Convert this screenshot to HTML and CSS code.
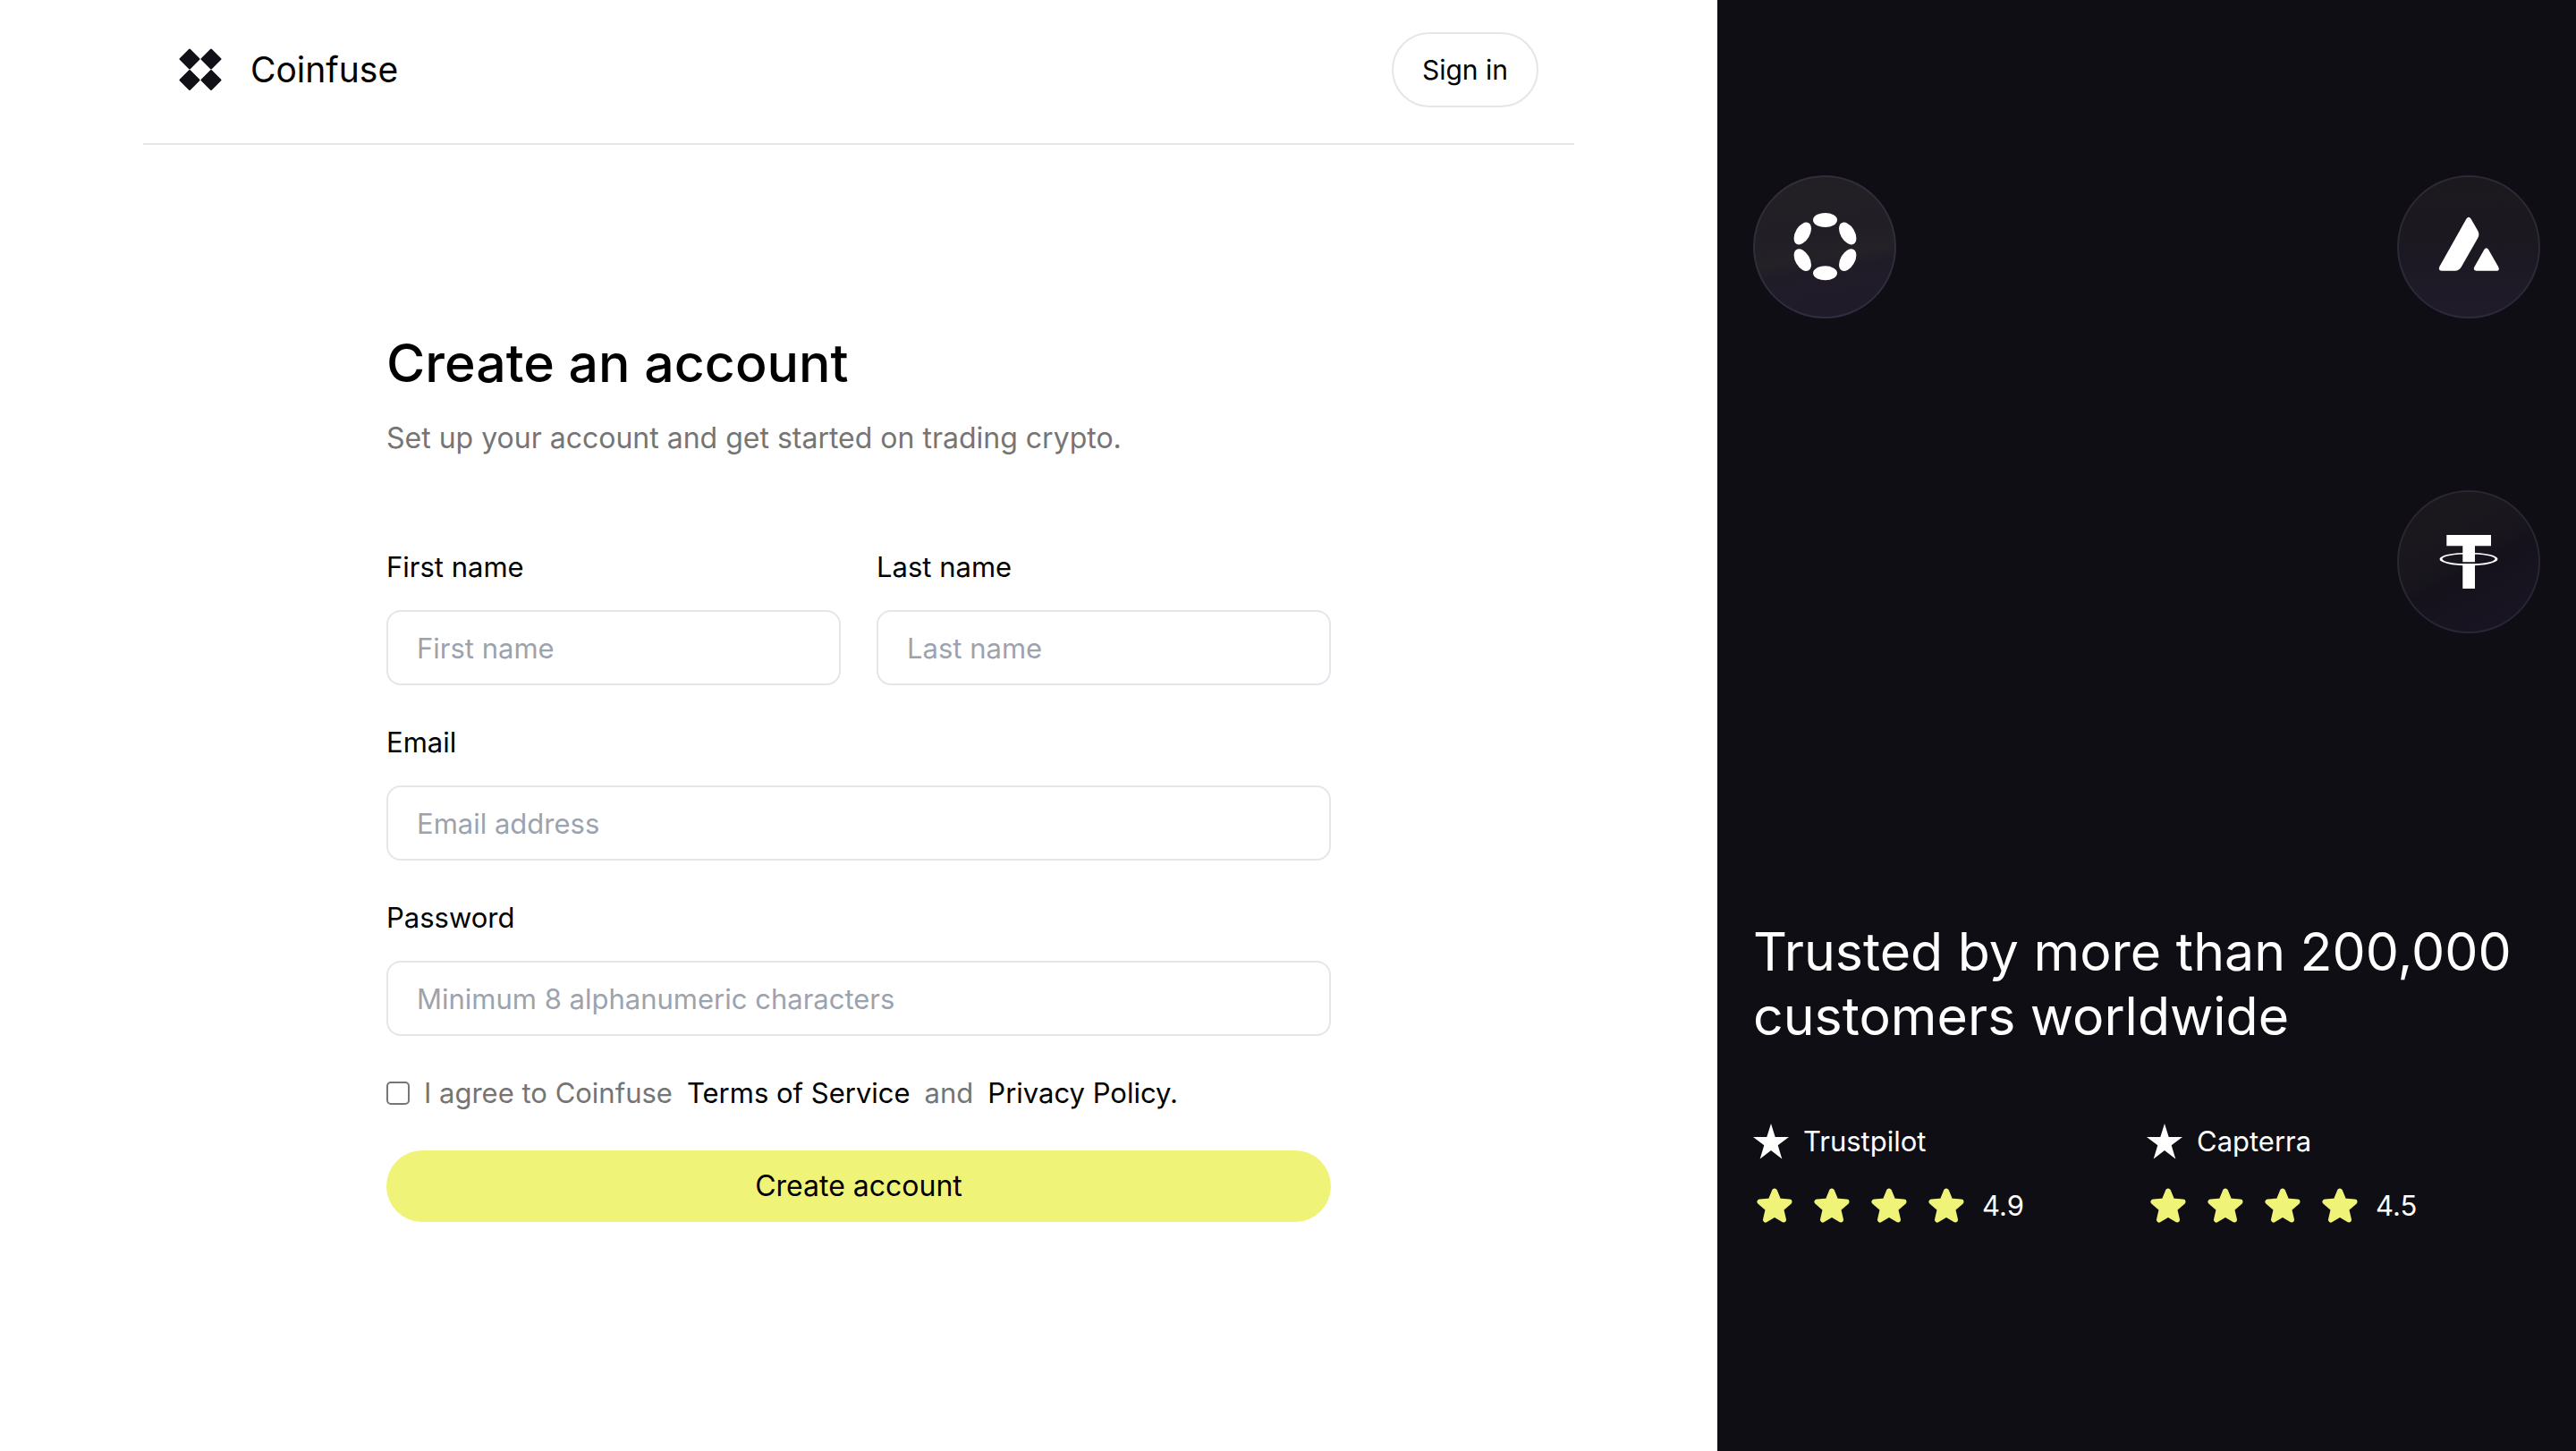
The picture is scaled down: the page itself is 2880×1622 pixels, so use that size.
FILE: index.html
```html
<!DOCTYPE html>
<html lang="en">
<head>
  <meta charset="utf-8">
  <meta name="viewport" content="width=device-width, initial-scale=1">
  <title>Create an account | Coinfuse</title>
  <link rel="stylesheet" href="styles.css">
</head>
<body>
  <svg class="sprite" aria-hidden="true">
    <symbol id="star" viewBox="0 0 40 40">
      <path d="M20 3.500L24.500 14.500L36.500 15.500L27.200 23.500L30 35.500L20 29.500L10 35.500L12.800 23.500L3.500 15.500L15.500 14.500Z" fill="currentColor" stroke="currentColor" stroke-width="6" stroke-linejoin="round"/>
    </symbol>
    <symbol id="star-sharp" viewBox="0 0 40 40">
      <path d="M20 0L24.700 15L40 15L27.700 24.300L32.300 39.500L20 30L7.700 39.500L12.300 24.300L0 15L15.300 15Z" fill="currentColor"/>
    </symbol>
    <linearGradient id="disc-a" x1="0.420" y1="0" x2="0.580" y2="1">
      <stop offset="0" stop-color="#232025"/><stop offset="0.400" stop-color="#211e26"/><stop offset="0.570" stop-color="#242127"/><stop offset="0.660" stop-color="#201c27"/><stop offset="1" stop-color="#201b2a"/>
    </linearGradient>
    <linearGradient id="disc-b" x1="0" y1="0" x2="0" y2="1">
      <stop offset="0" stop-color="#1c191e"/><stop offset="0.400" stop-color="#1b1820"/><stop offset="1" stop-color="#201b2a"/>
    </linearGradient>
    <linearGradient id="disc-c" x1="0.250" y1="0.050" x2="0.750" y2="0.950">
      <stop offset="0" stop-color="#1b181d"/><stop offset="0.400" stop-color="#19171d"/><stop offset="0.550" stop-color="#15121c"/><stop offset="1" stop-color="#191422"/>
    </linearGradient>
  </svg>

  <div class="page">
    <main class="signup">
      <header class="topbar">
        <a class="brand" href="#">
          <svg class="brand-mark" viewBox="0 0 48 48" aria-hidden="true">
            <path d="M12 1.500L22.500 12L12 22.500L1.500 12ZM36 1.500L46.500 12L36 22.500L25.500 12ZM12 25L22.500 35.500L12 46L1.500 35.500ZM36 25L46.500 35.500L36 46L25.500 35.500Z" fill="#121017" stroke="#121017" stroke-width="2" stroke-linejoin="round"/>
          </svg>
          <span>Coinfuse</span>
        </a>
        <button class="signin" type="button">Sign in</button>
      </header>

      <form class="form">
        <div class="intro">
          <h1>Create an account</h1>
          <p>Set up your account and get started on trading crypto.</p>
        </div>
        <div class="names">
          <div class="field">
            <label for="first">First name</label>
            <input id="first" type="text" placeholder="First name">
          </div>
          <div class="field">
            <label for="last">Last name</label>
            <input id="last" type="text" placeholder="Last name">
          </div>
        </div>
        <div class="field">
          <label for="email">Email</label>
          <input id="email" type="email" placeholder="Email address">
        </div>
        <div class="field">
          <label for="password">Password</label>
          <input id="password" type="password" placeholder="Minimum 8 alphanumeric characters">
        </div>
        <div class="agree">
          <input id="agree" type="checkbox">
          <label for="agree">I agree to Coinfuse</label>
          <a href="#">Terms of Service</a>
          <span>and</span>
          <a href="#">Privacy Policy.</a>
        </div>
        <button class="submit" type="submit">Create account</button>
      </form>
    </main>

    <aside class="promo">
      <div class="coins">
        <svg class="coin" viewBox="0 0 160 160" role="img" aria-label="Polkadot">
          <circle cx="80" cy="80" r="79" fill="url(#disc-a)" stroke="#322d3d" stroke-width="2"/>
          <g fill="#fff">
            <ellipse cx="80.500" cy="50" rx="13.500" ry="8"/>
            <ellipse cx="80.500" cy="109.300" rx="13.500" ry="8"/>
            <ellipse cx="55.300" cy="65" rx="13.500" ry="8" transform="rotate(-60 55.300 65)"/>
            <ellipse cx="105.700" cy="65" rx="13.500" ry="8" transform="rotate(60 105.700 65)"/>
            <ellipse cx="55.300" cy="94.600" rx="13.500" ry="8" transform="rotate(60 55.300 94.600)"/>
            <ellipse cx="105.700" cy="94.600" rx="13.500" ry="8" transform="rotate(-60 105.700 94.600)"/>
          </g>
        </svg>
        <svg class="coin" viewBox="0 0 160 160" role="img" aria-label="Avalanche">
          <circle cx="80" cy="80" r="79" fill="url(#disc-b)" stroke="#2d2937" stroke-width="2"/>
          <path d="M77.500 48.500Q80 44.800 82.500 48.500L90.300 62Q92.500 66 90.300 70L72 102Q69.500 106.700 64.500 106.700H50Q45.500 106.500 47.400 102ZM97.500 82.800Q99.700 79.500 102 82.800L113.300 102.500Q115 106.700 111 106.700H88.500Q84.500 106.500 86.300 102.500Z" fill="#fff"/>
        </svg>
        <svg class="coin coin-end" viewBox="0 0 160 160" role="img" aria-label="Tether">
          <circle cx="80" cy="80" r="79" fill="url(#disc-c)" stroke="#2a2633" stroke-width="2"/>
          <path d="M55.300 50H105V62.300H87V80.300H73.300V62.300H55.300ZM73.300 82.300H87V110H73.300Z" fill="#fff"/>
          <path fill-rule="evenodd" d="M47.500 77A32.500 7.300 0 1 1 112.500 77A32.500 7.300 0 1 1 47.500 77ZM50.500 76.800A29.500 5.500 0 1 0 109.500 76.800A29.500 5.500 0 1 0 50.500 76.800Z" fill="#fff"/>
        </svg>
      </div>
      <h2>Trusted by more than 200,000 customers worldwide</h2>
      <div class="ratings">
        <section class="rating">
          <div class="source"><svg class="star"><use href="#star-sharp"/></svg><span>Trustpilot</span></div>
          <div class="score">
            <svg class="star"><use href="#star"/></svg><svg class="star"><use href="#star"/></svg><svg class="star"><use href="#star"/></svg><svg class="star"><use href="#star"/></svg>
            <span>4.9</span>
          </div>
        </section>
        <section class="rating">
          <div class="source"><svg class="star"><use href="#star-sharp"/></svg><span>Capterra</span></div>
          <div class="score">
            <svg class="star"><use href="#star"/></svg><svg class="star"><use href="#star"/></svg><svg class="star"><use href="#star"/></svg><svg class="star"><use href="#star"/></svg>
            <span>4.5</span>
          </div>
        </section>
      </div>
    </aside>
  </div>
</body>
</html>
```
FILE: styles.css
```css
*,
*::before,
*::after {
  box-sizing: border-box;
}

body {
  margin: 0;
  background: #fff;
  color: #000;
  font: 400 31px/48px Inter, "Liberation Sans", sans-serif;
}

h1,
h2,
p {
  margin: 0;
}

a {
  color: inherit;
  text-decoration: none;
}

button,
input {
  font: inherit;
  color: inherit;
}

.sprite {
  position: absolute;
  width: 0;
  height: 0;
}

.page {
  display: grid;
  grid-template-columns: 2fr 1fr;
  min-height: 100vh;
}

.signup {
  padding: 0 160px 80px;
}

.topbar {
  display: flex;
  align-items: center;
  justify-content: space-between;
  padding: 36px 40px 40px;
  border-bottom: 2px solid #e5e5eb;
}

.brand {
  display: flex;
  align-items: center;
  gap: 32px;
  font-size: 39px;
}

.brand-mark {
  width: 48px;
  height: 48px;
}

.signin {
  height: 84px;
  padding: 0 32px;
  border: 2px solid #e5e5eb;
  border-radius: 42px;
  background: #fff;
  font-size: 30px;
}

.form {
  display: flex;
  flex-direction: column;
  gap: 40px;
  width: 66%;
  margin: 208px auto 0;
}

.intro {
  display: grid;
  gap: 24px;
  margin-bottom: 56px;
  color: #757575;
  font-size: 32px;
}

h1 {
  color: #000;
  font-size: 59px;
  font-weight: 500;
  line-height: 72px;
}

.names {
  display: grid;
  grid-template-columns: 1fr 1fr;
  gap: 40px;
}

.field {
  display: grid;
  gap: 24px;
}

.field input {
  width: 100%;
  height: 84px;
  padding: 0 32px;
  border: 2px solid #e5e5eb;
  border-radius: 16px;
  background: #fff;
}

.field input::placeholder {
  color: #9ca3af;
  opacity: 1;
}

.agree {
  display: flex;
  align-items: center;
  gap: 16px;
  color: #757575;
}

.agree a {
  color: #000;
}

.agree input {
  appearance: none;
  width: 26px;
  height: 26px;
  margin: 0;
  border: 2px solid #767676;
  border-radius: 5px;
  background: #fff;
}

.submit {
  height: 80px;
  border: 0;
  border-radius: 40px;
  background: #eff378;
  font-size: 32px;
}

.promo {
  padding: 196px 40px 80px;
  background: #0f0e14;
  color: #fff;
}

.coins {
  display: grid;
  grid-template-columns: auto auto;
  justify-content: space-between;
  row-gap: 192px;
}

.coin {
  display: block;
  width: 160px;
  height: 160px;
}

.coin-end {
  grid-column: 2;
}

h2 {
  margin-top: 320px;
  font-size: 59px;
  font-weight: 400;
  line-height: 72px;
}

.ratings {
  display: grid;
  grid-template-columns: 1fr 1fr;
  margin-top: 80px;
}

.rating {
  display: grid;
  gap: 24px;
}

.source,
.score {
  display: flex;
  align-items: center;
}

.source {
  gap: 16px;
}

.star {
  width: 40px;
  height: 40px;
}

.score {
  gap: 24px;
  padding-left: 4px;
}

.score .star {
  color: #eff378;
}

.score span {
  margin-left: -4px;
}
```
